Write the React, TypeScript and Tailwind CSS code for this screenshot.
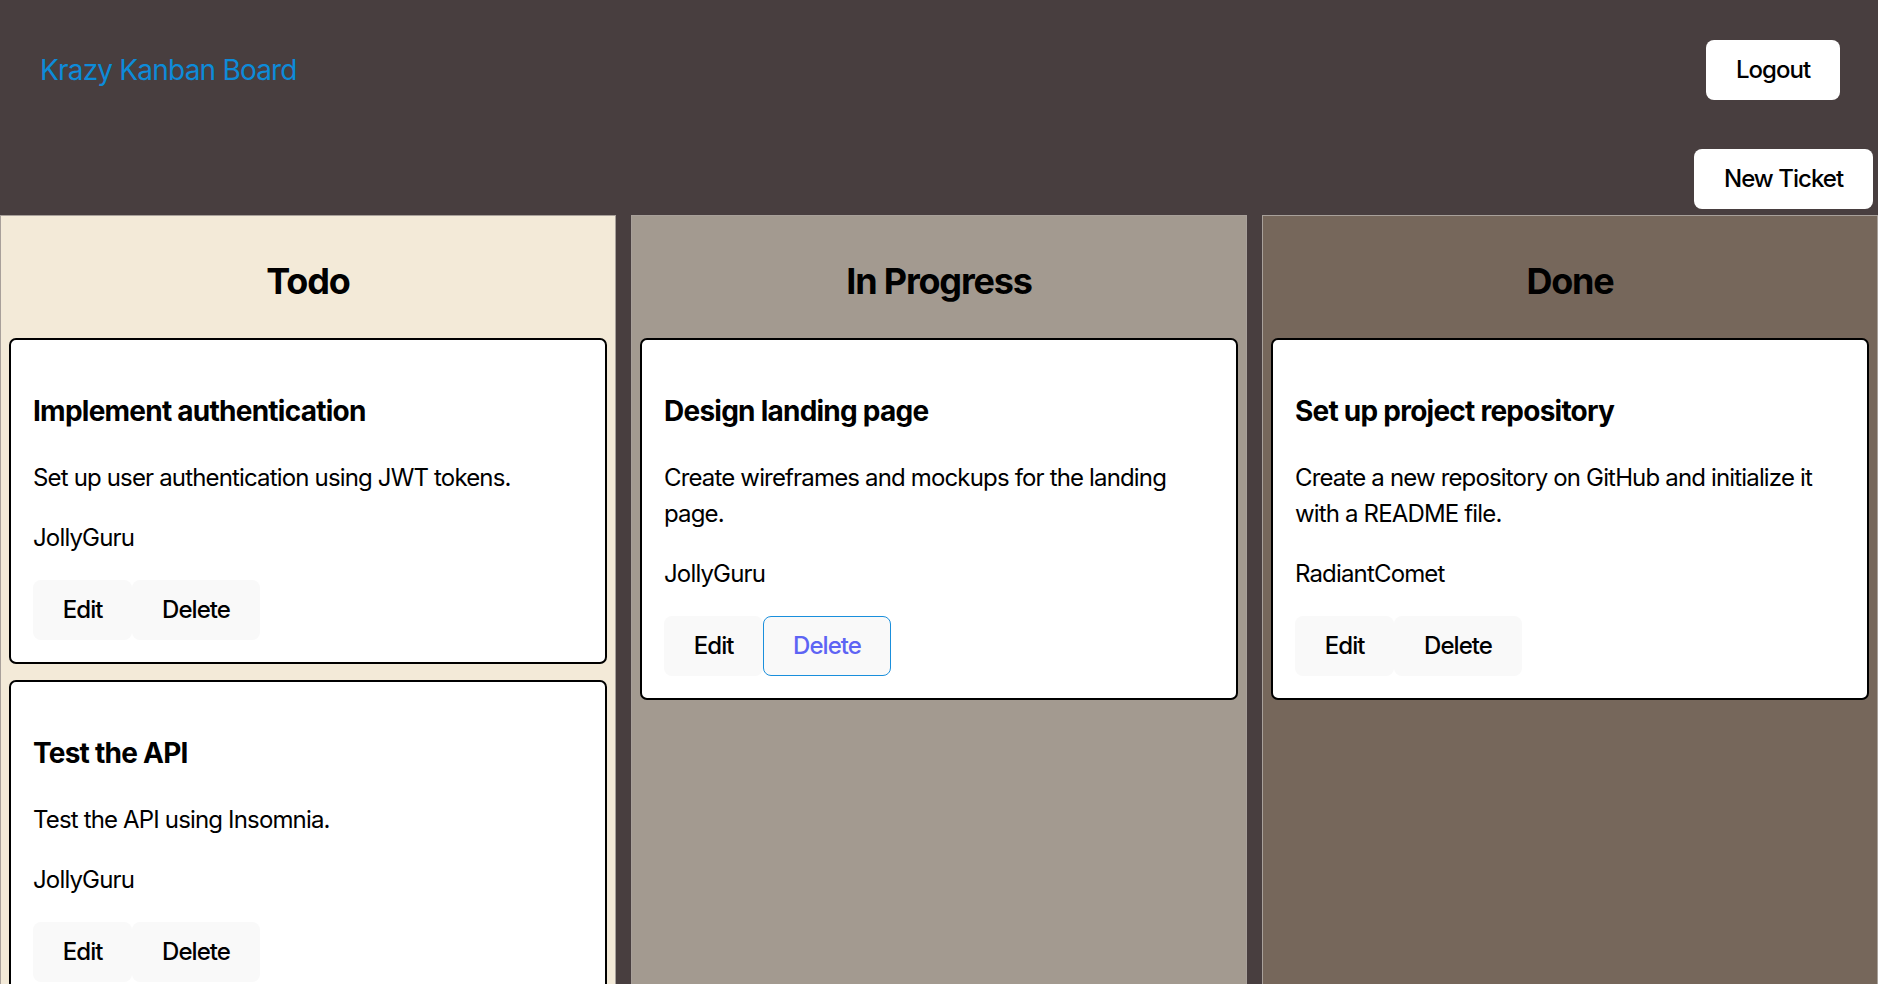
import React from 'react'

type Ticket = {
  id: number
  name: string
  description: string
  assignee: string
}

const columns: { title: string; bg: string; tickets: Ticket[] }[] = [
  {
    title: 'Todo',
    bg: 'bg-[#f3ead8]',
    tickets: [
      { id: 1, name: 'Implement authentication', description: 'Set up user authentication using JWT tokens.', assignee: 'JollyGuru' },
      { id: 2, name: 'Test the API', description: 'Test the API using Insomnia.', assignee: 'JollyGuru' },
    ],
  },
  {
    title: 'In Progress',
    bg: 'bg-[#a39a90]',
    tickets: [
      { id: 3, name: 'Design landing page', description: 'Create wireframes and mockups for the landing page.', assignee: 'JollyGuru' },
    ],
  },
  {
    title: 'Done',
    bg: 'bg-[#76675b]',
    tickets: [
      { id: 4, name: 'Set up project repository', description: 'Create a new repository on GitHub and initialize it with a README file.', assignee: 'RadiantComet' },
    ],
  },
]

const btn =
  'rounded-[8px] border px-[1.2em] py-[0.6em] text-[24px] leading-[normal] font-medium tracking-[-0.04em] cursor-pointer'

function TicketCard({ ticket }: { ticket: Ticket }) {
  const hovered = ticket.id === 3
  return (
    <div className="bg-white border-2 border-black rounded-[7px] p-[22px]">
      <h3 className="text-[28px] font-bold leading-[1.5] tracking-[-0.027em] mt-[28px] mb-[28px]">{ticket.name}</h3>
      <p className="mb-[24px]">{ticket.description}</p>
      <p className="mb-[24px]">{ticket.assignee}</p>
      <div className="flex">
        <button className={`${btn} border-transparent bg-[#f9f9f9] text-black`}>Edit</button>
        {hovered ? (
          <button className={`${btn} border-[#1a8fdc] bg-[#f9f9f9] text-[#5d64f4]`}>Delete</button>
        ) : (
          <button className={`${btn} border-transparent bg-[#f9f9f9] text-black`}>Delete</button>
        )}
      </div>
    </div>
  )
}

export default function App() {
  return (
    <div className="min-h-screen bg-[#483e3f] text-black font-[Inter,system-ui,sans-serif] text-[24px] leading-[1.5] tracking-[-0.035em]">
      <header className="h-[215px] flex flex-col">
        <div className="flex items-center justify-between pl-[40px] pr-[38px] pt-[40px]">
          <span className="text-[#0d8bd9] text-[28px] leading-[1.5] font-normal tracking-[-0.8px]">
            Krazy Kanban Board
          </span>
          <button className={`${btn} border-transparent bg-white text-black`}>Logout</button>
        </div>
        <div className="flex justify-end pr-[5px] mt-[49px]">
          <button className={`${btn} border-transparent bg-white text-black`}>New Ticket</button>
        </div>
      </header>

      <main className="grid grid-cols-3 gap-[15px]">
        {columns.map((col) => (
          <section key={col.title} className={`${col.bg} border border-[#a8a09a] p-[8px] min-h-[769px]`}>
            <h2 className="text-center text-[36px] font-bold leading-[1.5] tracking-[-0.033em] my-[30px]">{col.title}</h2>
            <div className="flex flex-col gap-[16px]">
              {col.tickets.map((t) => (
                <TicketCard key={t.id} ticket={t} />
              ))}
            </div>
          </section>
        ))}
      </main>
    </div>
  )
}
